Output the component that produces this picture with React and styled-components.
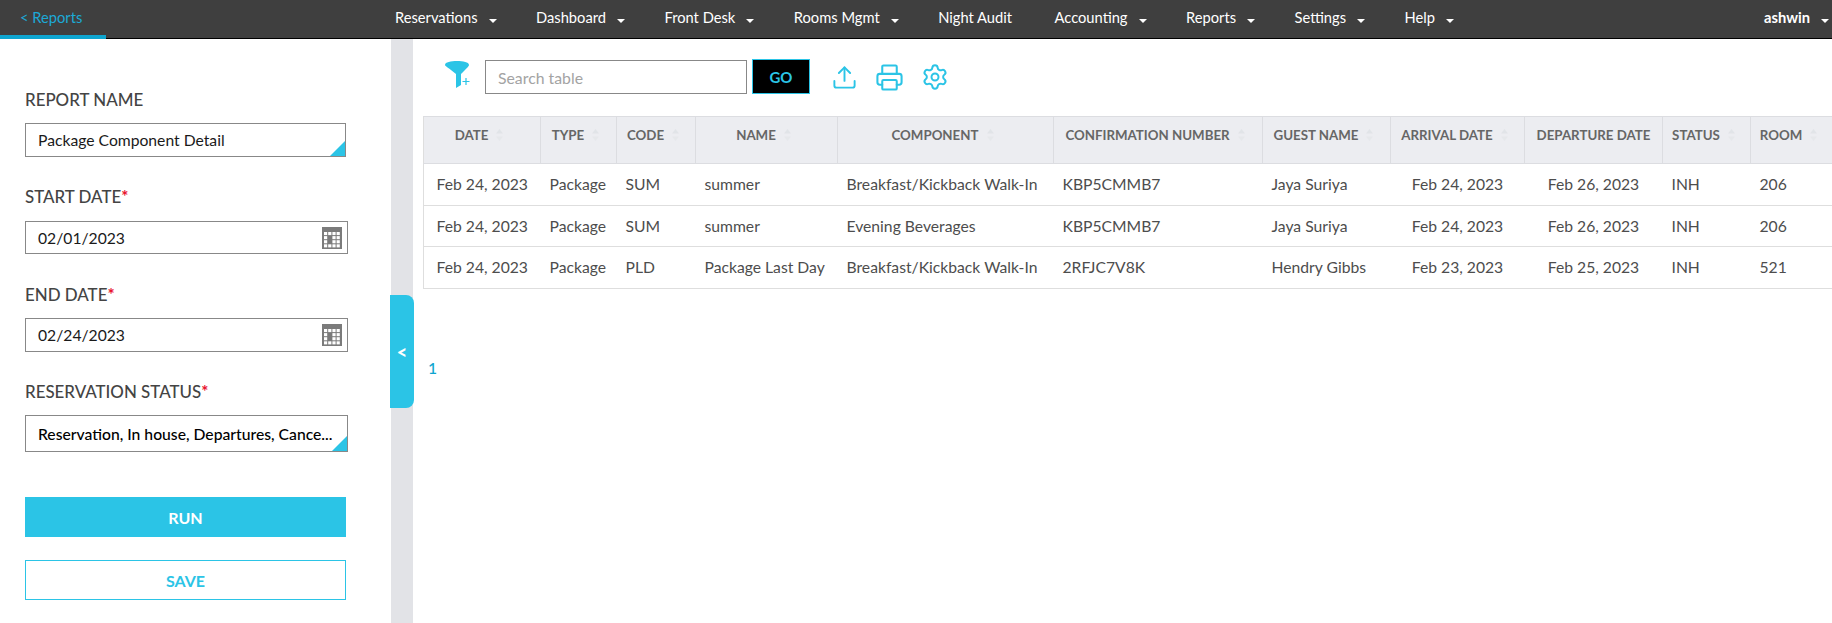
import React from 'react';
import styled, { createGlobalStyle } from 'styled-components';
import { Upload, Printer, Settings } from 'lucide-react';

const GlobalStyle = createGlobalStyle`
  html, body {
    margin: 0;
    height: 100%;
    overflow: hidden;
    background: #ffffff;
    font-family: Lato, "Open Sans", sans-serif;
  }
`;

const Page = styled.div`
  height: 623px;
  display: flex;
  flex-direction: column;
`;

const Header = styled.header`
  height: 39px;
  box-sizing: border-box;
  flex-shrink: 0;
  background: #3f3f3f;
  border-bottom: 1px solid #000000;
  display: flex;
  color: #ffffff;
  font-size: 14.7px;
`;

const BackTab = styled.a`
  width: 106px;
  height: 39px;
  box-sizing: border-box;
  padding: 8px 0 0 20px;
  border-bottom: 4px solid #0ea5cf;
  color: #1ca9d6;
  font-size: 14.7px;
  line-height: 18px;
`;

const Nav = styled.nav`
  margin-left: 289px;
  display: flex;
  gap: 39.5px;
`;

const NavItem = styled.a`
  display: flex;
  align-items: center;
  height: 34px;
  margin-right: ${(props) => (props.$plain ? '3px' : '0')};
`;

const Caret = styled.span`
  width: 0;
  height: 0;
  margin: 7px 0 0 11px;
  border-left: 4px solid transparent;
  border-right: 4px solid transparent;
  border-top: 4px solid #ffffff;
`;

const User = styled(NavItem)`
  margin-left: auto;
  margin-right: 3px;
  font-weight: 700;
`;

const Main = styled.div`
  flex: 1;
  display: flex;
  min-height: 0;
`;

const Sidebar = styled.aside`
  width: 391px;
  flex-shrink: 0;
  box-sizing: border-box;
  padding: 51px 0 0 25px;
`;

const Label = styled.div`
  height: 20px;
  margin-top: ${(props) => props.$top || '30px'};
  font-size: 16.9px;
  line-height: 20px;
  font-weight: 500;
  color: #444444;
  white-space: nowrap;
`;

const Required = styled.span`
  color: #e8112d;
  font-weight: 700;
`;

const Field = styled.div`
  position: relative;
  width: ${(props) => props.$width};
  height: ${(props) => props.$height};
  margin-top: ${(props) => props.$top || '13px'};
  box-sizing: border-box;
  border: 1px solid #888888;
  padding-left: 12px;
  display: flex;
  align-items: center;
  font-size: 15.7px;
  font-weight: ${(props) => (props.$strong ? 500 : 400)};
  color: ${(props) => (props.$strong ? '#000000' : '#1a1a1a')};
  white-space: nowrap;
`;

const CornerMark = styled.span`
  position: absolute;
  right: 0;
  bottom: 0;
  width: 15px;
  height: 15px;
  background: #2bc4e6;
  clip-path: polygon(100% 0, 100% 100%, 0 100%);
`;

const CalendarSvg = styled.svg`
  position: absolute;
  right: 5px;
  top: 5px;
`;

const PrimaryButton = styled.button`
  display: block;
  width: 321px;
  height: 40px;
  margin-top: ${(props) => props.$top};
  padding: 0;
  box-sizing: border-box;
  border: 1px solid #2bc4e6;
  background: ${(props) => (props.$outline ? '#ffffff' : '#2bc4e6')};
  color: ${(props) => (props.$outline ? '#2bc4e6' : '#ffffff')};
  font-family: inherit;
  font-size: 16px;
  font-weight: 700;
`;

const Gutter = styled.div`
  width: 22px;
  flex-shrink: 0;
  box-sizing: border-box;
  padding-top: 256px;
  background: #e2e3e7;
`;

const Collapse = styled.div`
  width: 24px;
  height: 113px;
  margin-left: -1px;
  background: #2bc4e6;
  border-radius: 0 8px 8px 0;
  color: #ffffff;
  font-size: 18px;
  font-weight: 900;
  display: flex;
  align-items: center;
  justify-content: center;
`;

const Content = styled.main`
  flex: 1;
  min-width: 0;
  overflow: hidden;
`;

const Toolbar = styled.div`
  height: 77px;
  box-sizing: border-box;
  padding: 20px 0 0 32px;
  display: flex;
  align-items: flex-start;
`;

const FunnelSvg = styled.svg`
  margin: 2px 15px 0 0;
`;

const SearchBox = styled.div`
  width: 262px;
  height: 34px;
  margin-top: 1px;
  box-sizing: border-box;
  border: 1px solid #888888;
  padding-left: 12px;
  display: flex;
  align-items: center;
  font-size: 15.8px;
  color: #a3a3a3;
`;

const GoButton = styled.button`
  width: 58px;
  height: 35px;
  margin-left: 5px;
  padding: 0;
  background: #000000;
  border: 1px solid #2bc4e6;
  color: #2bc4e6;
  font-family: inherit;
  font-size: 15px;
  font-weight: 700;
`;

const ToolIcons = styled.div`
  display: flex;
  align-items: center;
  height: 36px;
  margin-left: 21px;
  gap: 17px;
  color: #2bc4e6;
`;

const Table = styled.table`
  width: 1409px;
  margin-left: 10px;
  table-layout: fixed;
  border-collapse: collapse;
  border-left: 1px solid #dedede;
  font-size: 15.7px;
  color: #4d4d4d;
`;

const HeadRow = styled.tr`
  height: 47px;
  background: #ecedf1;
  border-top: 1px solid #dcdde1;
  border-bottom: 1px solid #dcdde1;
`;

const HeadCell = styled.th`
  padding: 0 0 11px;
  border-right: 1px solid #dcdde1;
  font-size: 13.3px;
  font-weight: 700;
  color: #666666;
  text-align: center;
  white-space: nowrap;
`;

const SortSvg = styled.svg`
  margin: 0 6px 0 8px;
  vertical-align: -1px;
`;

const Row = styled.tr`
  height: 41.5px;
  border-bottom: 1px solid #dedede;
`;

const Cell = styled.td`
  padding: ${(props) => (props.$center ? '0' : '0 0 0 9px')};
  text-align: ${(props) => (props.$center ? 'center' : 'left')};
  white-space: nowrap;
`;

const Pager = styled.div`
  margin-top: 70px;
  padding-left: 15px;
  font-size: 15.7px;
  font-weight: 500;
  line-height: 18px;
  color: #0ea5cf;
`;

const columns = [
  { title: 'DATE', width: 117, center: true },
  { title: 'TYPE', width: 76 },
  { title: 'CODE', width: 79 },
  { title: 'NAME', width: 142 },
  { title: 'COMPONENT', width: 216 },
  { title: 'CONFIRMATION NUMBER', width: 209 },
  { title: 'GUEST NAME', width: 128 },
  { title: 'ARRIVAL DATE', width: 134, center: true },
  { title: 'DEPARTURE DATE', width: 138, center: true, noSort: true },
  { title: 'STATUS', width: 88 },
  { title: 'ROOM', width: 82 },
];

const rows = [
  ['Feb 24, 2023', 'Package', 'SUM', 'summer', 'Breakfast/Kickback Walk-In', 'KBP5CMMB7', 'Jaya Suriya', 'Feb 24, 2023', 'Feb 26, 2023', 'INH', '206'],
  ['Feb 24, 2023', 'Package', 'SUM', 'summer', 'Evening Beverages', 'KBP5CMMB7', 'Jaya Suriya', 'Feb 24, 2023', 'Feb 26, 2023', 'INH', '206'],
  ['Feb 24, 2023', 'Package', 'PLD', 'Package Last Day', 'Breakfast/Kickback Walk-In', '2RFJC7V8K', 'Hendry Gibbs', 'Feb 23, 2023', 'Feb 25, 2023', 'INH', '521'],
];

const navItems = ['Reservations', 'Dashboard', 'Front Desk', 'Rooms Mgmt', 'Night Audit', 'Accounting', 'Reports', 'Settings', 'Help'];

const CalendarIcon = () => (
  <CalendarSvg width="20" height="22" viewBox="0 0 20 22">
    <rect width="20" height="22" fill="#7b7b7b" />
    {[0, 1, 2, 3].map((r) =>
      [0, 1, 2, 3].map((c) => (
        <rect
          key={`${r}-${c}`}
          x={2 + c * 4.2}
          y={5 + r * 4.1}
          width="3.2"
          height="3.1"
          fill={(r === 1 || r === 2) && c === 1 ? '#7b7b7b' : '#ffffff'}
        />
      )),
    )}
  </CalendarSvg>
);

const SortIcon = () => (
  <SortSvg width="7" height="12" viewBox="0 0 7 12">
    <path d="M3.5 0 7 4.5H0Z" fill="#e1e4e8" />
    <path d="M3.5 12 7 7.5H0Z" fill="#e6e8eb" />
  </SortSvg>
);

const App = () => (
  <Page>
    <GlobalStyle />
    <Header>
      <BackTab>{'<'}&nbsp;Reports</BackTab>
      <Nav>
        {navItems.map((item) =>
          item === 'Night Audit' ? (
            <NavItem key={item} $plain>
              {item}
            </NavItem>
          ) : (
            <NavItem key={item}>
              {item}
              <Caret />
            </NavItem>
          ),
        )}
      </Nav>
      <User>
        ashwin
        <Caret />
      </User>
    </Header>
    <Main>
      <Sidebar>
        <Label $top="0">REPORT NAME</Label>
        <Field $width="321px" $height="34px">
          Package Component Detail
          <CornerMark />
        </Field>
        <Label>
          START DATE<Required>*</Required>
        </Label>
        <Field $width="323px" $height="33px" $top="14px">
          02/01/2023
          <CalendarIcon />
        </Field>
        <Label $top="31px">
          END DATE<Required>*</Required>
        </Label>
        <Field $width="323px" $height="34px">
          02/24/2023
          <CalendarIcon />
        </Field>
        <Label>
          RESERVATION STATUS<Required>*</Required>
        </Label>
        <Field $width="323px" $height="37px" $strong>
          Reservation, In house, Departures, Cance...
          <CornerMark />
        </Field>
        <PrimaryButton $top="45px">RUN</PrimaryButton>
        <PrimaryButton $top="23px" $outline>
          SAVE
        </PrimaryButton>
      </Sidebar>
      <Gutter>
        <Collapse>{'<'}</Collapse>
      </Gutter>
      <Content>
        <Toolbar>
          <FunnelSvg width="25" height="27" viewBox="0 0 25 27">
            <path
              d="M0 4C0 1 6 0 12 0s12 1 12 4c0 1-2 3-8 9v11l-5 3V13C4 7 0 5 0 4Z"
              fill="#2bc4e6"
            />
            <path d="M21 17v7M17.5 20.5h7" stroke="#2bc4e6" strokeWidth="1.2" />
          </FunnelSvg>
          <SearchBox>Search table</SearchBox>
          <GoButton>GO</GoButton>
          <ToolIcons>
            <Upload size={27} strokeWidth={1.7} />
            <Printer size={29} strokeWidth={1.7} />
            <Settings size={28} strokeWidth={1.7} />
          </ToolIcons>
        </Toolbar>
        <Table>
          <colgroup>
            {columns.map((col) => (
              <col key={col.title} width={col.width} />
            ))}
          </colgroup>
          <thead>
            <HeadRow>
              {columns.map((col) => (
                <HeadCell key={col.title}>
                  {col.title}
                  {!col.noSort && <SortIcon />}
                </HeadCell>
              ))}
            </HeadRow>
          </thead>
          <tbody>
            {rows.map((row, i) => (
              <Row key={i}>
                {row.map((value, j) => (
                  <Cell key={j} $center={columns[j].center}>
                    {value}
                  </Cell>
                ))}
              </Row>
            ))}
          </tbody>
        </Table>
        <Pager>1</Pager>
      </Content>
    </Main>
  </Page>
);

export default App;
